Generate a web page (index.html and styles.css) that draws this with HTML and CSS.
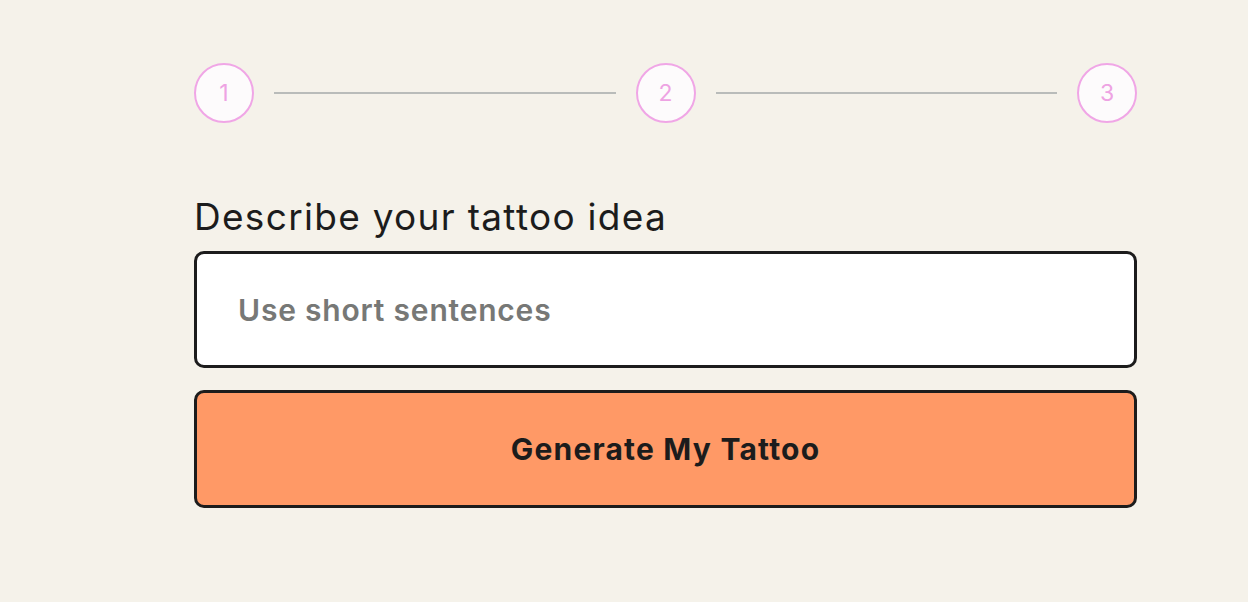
FILE: index.html
```html
<!DOCTYPE html>
<html>
<head>
<meta charset="utf-8">
<link rel="stylesheet" href="styles.css">
</head>
<body>
<main class="wrap">
  <div class="steps">
    <div class="step">1</div>
    <div class="line"></div>
    <div class="step">2</div>
    <div class="line"></div>
    <div class="step">3</div>
  </div>
  <label class="label" for="idea">Describe your tattoo idea</label>
  <input id="idea" class="idea" type="text" placeholder="Use short sentences">
  <button class="go">Generate My Tattoo</button>
</main>
</body>
</html>
```
FILE: styles.css
```css
html, body {
  margin: 0;
  padding: 0;
  background: #f5f2ea;
  font-family: Inter, "DejaVu Sans", sans-serif;
}
.wrap {
  width: 943px;
  margin-left: 194px;
  padding-top: 63px;
  display: flex;
  flex-direction: column;
}
.steps {
  display: flex;
  align-items: center;
  gap: 20px;
}
.step {
  width: 56px;
  height: 56px;
  border: 2px solid #f0a6e6;
  border-radius: 50%;
  background: #fdfbfc;
  color: #eea3e3;
  font-size: 23px;
  display: flex;
  align-items: center;
  justify-content: center;
}
.line {
  flex: 1;
  height: 2px;
  background: #b9bcba;
}
.label {
  margin-top: 72px;
  font-size: 37px;
  color: #1c1c1c;
  letter-spacing: 1.3px;
  line-height: 44px;
}
.idea {
  margin-top: 12px;
  height: 117px;
  box-sizing: border-box;
  border: 3px solid #1c1c1c;
  border-radius: 10px;
  background: #fff;
  padding: 0 41px;
  font-family: inherit;
  font-size: 30px;
  font-weight: 600;
  letter-spacing: 0.8px;
  color: #1c1c1c;
  outline: none;
}
.idea::placeholder {
  color: #777876;
}
.go {
  margin-top: 22px;
  height: 118px;
  box-sizing: border-box;
  border: 3px solid #1c1c1c;
  border-radius: 10px;
  background: #ff9966;
  font-family: inherit;
  font-size: 30px;
  font-weight: 700;
  letter-spacing: 1.2px;
  color: #1c1c1c;
  cursor: pointer;
}
```
